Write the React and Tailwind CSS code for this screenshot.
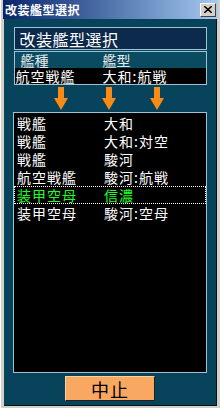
import React from "react";

const font = { fontFamily: '"Noto Sans CJK JP", "Noto Sans", sans-serif' };

function Arrow() {
  return (
    <svg width="14" height="23" viewBox="0 0 14 23">
      <polygon points="4,0 10,0 10,11 14,11 7,23 0,11 4,11" fill="#f88a18" />
    </svg>
  );
}

const rows = [
  ["戦艦", "大和"],
  ["戦艦", "大和:対空"],
  ["戦艦", "駿河"],
  ["航空戦艦", "駿河:航戦"],
  ["装甲空母", "信濃", true],
  ["装甲空母", "駿河:空母"],
];

export default function App() {
  return (
    <div
      className="w-[220px] h-[408px] bg-[#d4d0c8] flex flex-col px-[2px] pb-[2px] border-l border-white"
      style={font}
    >
      <div className="h-[19px] shrink-0 bg-gradient-to-r from-[#0a246a] to-[#a6caf0] flex items-center justify-between pl-[2px] pr-[2px]">
        <span className="text-white text-[12px] font-bold leading-[16px] tracking-[0.5px]">
          改装艦型選択
        </span>
        <div className="w-[16px] h-[14px] bg-[#d4d0c8] border-t border-l border-white border-r border-b border-r-[#404040] border-b-[#404040] flex items-center justify-center">
          <svg width="8" height="7" viewBox="0 0 8 7">
            <path d="M0,0 L8,7 M8,0 L0,7" stroke="#000" strokeWidth="1.6" />
          </svg>
        </div>
      </div>
      <div className="flex-1 mx-[1px] bg-[#07435a] border-r border-b border-[#00141e] flex flex-col items-center pt-[8px]">
        <div className="w-[193px] h-[23px] shrink-0 bg-[#0c2a4c] border border-[#9ec3d3] flex items-center pl-[5px]">
          <span className="text-white text-[16px] leading-[20px] tracking-[0.5px]">改装艦型選択</span>
        </div>
        <div className="w-[193px] shrink-0 mt-[1px] border border-[#9ec3d3] flex flex-col">
          <div className="h-[16px] bg-[#0b4b62] flex items-center text-[#e8e8e8] text-[14px] leading-[16px]">
            <span className="w-[88px] pl-[6px]">艦種</span>
            <span>艦型</span>
          </div>
          <div className="h-[16px] bg-black flex items-center text-white text-[14px] leading-[16px] tracking-[1px]">
            <span className="w-[88px] pl-[1px]">航空戦艦</span>
            <span>大和:航戦</span>
          </div>
        </div>
        <div className="w-[193px] h-[27px] shrink-0 flex items-start pt-[2px] pl-[40px] gap-[34px]">
          <Arrow />
          <Arrow />
          <Arrow />
        </div>
        <div className="w-[194px] h-[261px] shrink-0 bg-black border border-[#9ec3d3] flex flex-col pt-[1px]">
          {rows.map(([a, b, sel], i) => (
            <div
              key={i}
              className={
                "h-[18px] flex items-center text-[14px] leading-[16px] tracking-[1px] " +
                (sel
                  ? "text-[#22ff22] border border-dotted border-white"
                  : "text-white border border-transparent")
              }
            >
              <span className="w-[89px] pl-[2px]">{a}</span>
              <span>{b}</span>
            </div>
          ))}
        </div>
        <div className="mt-[3px] w-[90px] h-[25px] shrink-0 bg-[#f8a860] border border-t-[#ffd0a0] border-l-[#ffd0a0] border-r-[#202020] border-b-[#202020] flex items-center justify-center">
          <span className="text-black text-[18px] leading-[22px] tracking-[1px]">中止</span>
        </div>
      </div>
    </div>
  );
}
